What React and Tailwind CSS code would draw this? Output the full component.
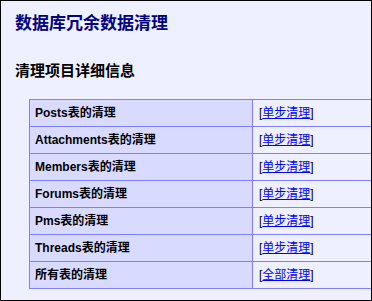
import React from 'react';

const rows = [
  { name: 'Posts表的清理', action: '单步清理' },
  { name: 'Attachments表的清理', action: '单步清理' },
  { name: 'Members表的清理', action: '单步清理' },
  { name: 'Forums表的清理', action: '单步清理' },
  { name: 'Pms表的清理', action: '单步清理' },
  { name: 'Threads表的清理', action: '单步清理' },
  { name: '所有表的清理', action: '全部清理' },
];

const font = { fontFamily: '"Liberation Sans", "Noto Sans CJK SC", sans-serif' };

export default function App() {
  return (
    <div
      className="w-[372px] h-[301px] overflow-hidden border border-black bg-[#eff0ff] text-black"
      style={font}
    >
      <div className="pl-[14px] pt-[11px]">
        <h1 className="text-[17px] leading-[24px] font-bold text-[#000080]">
          数据库冗余数据清理
        </h1>
        <h2 className="mt-[24px] text-[15px] leading-[22px] font-bold">
          清理项目详细信息
        </h2>
      </div>
      <table className="ml-[28px] mt-[17px] w-[400px] border-collapse">
        <tbody>
          {rows.map((row) => (
            <tr key={row.name}>
              <td className="w-[223px] h-[27px] p-0 pl-[5px] border border-[#8080ff] bg-[#d8dbff] text-[12px] font-bold leading-[26px]">
                {row.name}
              </td>
              <td className="h-[27px] p-0 pl-[6px] border border-[#8080ff] text-[12px] leading-[26px]">
                [
                <a href="#" className="text-[#0000ff] underline">
                  {row.action}
                </a>
                ]
              </td>
            </tr>
          ))}
        </tbody>
      </table>
    </div>
  );
}
